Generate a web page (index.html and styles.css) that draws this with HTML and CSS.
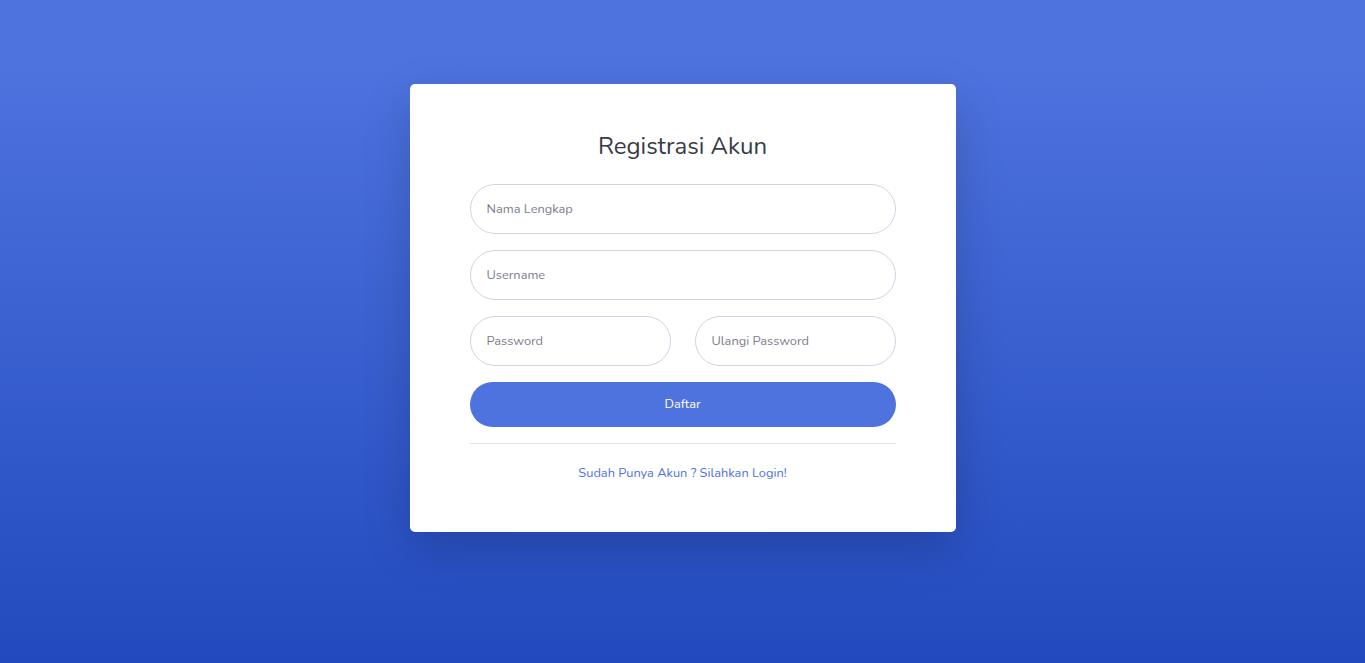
FILE: index.html
```html
<!DOCTYPE html>
<html lang="id">
<head>
<meta charset="utf-8">
<title>Registrasi Akun</title>
<link rel="stylesheet" href="styles.css">
</head>
<body>
<div class="page">
  <div class="card">
    <h1 class="title">Registrasi Akun</h1>
    <form class="form">
      <input class="field" type="text" placeholder="Nama Lengkap">
      <input class="field" type="text" placeholder="Username">
      <div class="pair">
        <input class="field" type="password" placeholder="Password">
        <input class="field" type="password" placeholder="Ulangi Password">
      </div>
      <button class="btn" type="button">Daftar</button>
    </form>
    <hr class="divider">
    <div class="foot"><a class="link" href="#">Sudah Punya Akun ? Silahkan Login!</a></div>
  </div>
</div>
</body>
</html>
```
FILE: styles.css
```css
html, body {
  margin: 0;
  height: 100%;
}
body {
  background: linear-gradient(180deg, #4e73df 10%, #224abe 100%);
  font-family: "Nunito", Lato, "Noto Sans", sans-serif;
  color: #858796;
}
.page {
  display: flex;
  justify-content: center;
  padding-top: 84px;
}
.card {
  width: 546px;
  box-sizing: border-box;
  background: #fff;
  border-radius: 5px;
  padding: 48px 60px 49px;
  box-shadow: 0 16px 48px rgba(0, 0, 0, 0.175);
}
.title {
  margin: 0 0 23px;
  text-align: center;
  font-size: 24px;
  font-weight: 400;
  line-height: 29px;
  color: #3a3b45;
}
.form {
  display: flex;
  flex-direction: column;
  gap: 16px;
}
.pair {
  display: grid;
  grid-template-columns: 1fr 1fr;
  gap: 24px;
}
.field {
  box-sizing: border-box;
  width: 100%;
  height: 50px;
  border: 1px solid #d1d3e2;
  border-radius: 25px;
  padding: 0 16px;
  font-family: inherit;
  font-size: 12.8px;
  color: #6e707e;
  outline: none;
}
.field::placeholder {
  color: #7b7d8a;
}
.btn {
  height: 45px;
  border: none;
  border-radius: 23px;
  background: #4e73df;
  color: #fff;
  font-family: inherit;
  font-size: 12.8px;
  padding-bottom: 2px;
}
.divider {
  margin: 16px 0;
  border: 0;
  border-top: 1px solid #e3e6f0;
}
.foot {
  text-align: center;
  font-size: 12.8px;
  line-height: 20px;
  padding-top: 3px;
}
.link {
  color: #4e73df;
  text-decoration: none;
}
```
